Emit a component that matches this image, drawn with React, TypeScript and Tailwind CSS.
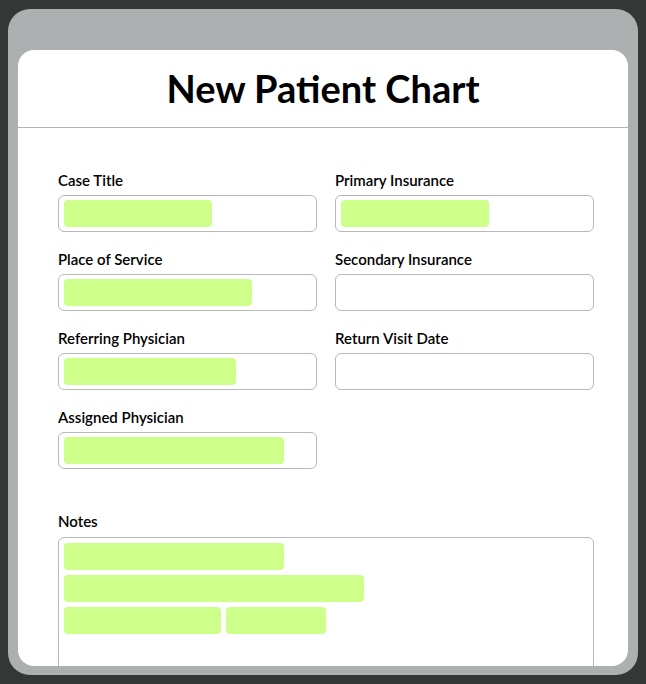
import React from 'react'

const fields = [
  { label: 'Case Title', fill: 148 },
  { label: 'Primary Insurance', fill: 148 },
  { label: 'Place of Service', fill: 188 },
  { label: 'Secondary Insurance', fill: 0 },
  { label: 'Referring Physician', fill: 172 },
  { label: 'Return Visit Date', fill: 0 },
  { label: 'Assigned Physician', fill: 220 },
]

function Field({ label, fill }: { label: string; fill: number }) {
  return (
    <div className="flex flex-col">
      <label className="h-[18px] mb-[6px] text-[15px] font-semibold leading-[18px] text-black">{label}</label>
      <div className="h-[37px] rounded-md border-[1.5px] border-[#b8b8b8] bg-white px-[5px] py-1">
        {fill > 0 && <div className="h-full rounded-[4px] bg-[#cdff8a]" style={{ width: fill }} />}
      </div>
    </div>
  )
}

export default function App() {
  return (
    <div
      className="w-[646px] h-[684px] overflow-hidden bg-[#353737] pl-2 pr-2 pt-[9px] pb-[9px]"
      style={{ fontFamily: 'Lato, "Noto Sans", sans-serif' }}>
      <div className="h-full rounded-[22px] bg-[#adb0b0] px-[10px] pt-[41px] pb-[9px]">
        <div className="h-full flex flex-col overflow-hidden rounded-2xl bg-white">
          {/* Header */}
          <div className="h-[78px] shrink-0 flex items-center justify-center border-b-[1.5px] border-[#b4b4b4]">
            <h1 className="text-[38px] font-bold text-black">New Patient Chart</h1>
          </div>

          {/* Form */}
          <div className="pl-10 pr-[34px] pt-[43px]">
            <div className="grid grid-cols-2 gap-x-[18px] gap-y-[18px]">
              {fields.map(f => <Field key={f.label} label={f.label} fill={f.fill} />)}
            </div>

            <div className="mt-[43px] flex flex-col">
              <label className="h-[18px] mb-[7px] text-[15px] font-semibold leading-[18px] text-black">Notes</label>
              <div className="h-[160px] rounded-md border-[1.5px] border-[#b8b8b8] px-[5px] pt-[5px] flex flex-col gap-[5px]">
                <div className="h-[27px] w-[220px] rounded-[4px] bg-[#cdff8a]" />
                <div className="h-[27px] w-[300px] rounded-[4px] bg-[#cdff8a]" />
                <div className="flex gap-[5px]">
                  <div className="h-[27px] w-[157px] rounded-[4px] bg-[#cdff8a]" />
                  <div className="h-[27px] w-[100px] rounded-[4px] bg-[#cdff8a]" />
                </div>
              </div>
            </div>
          </div>
        </div>
      </div>
    </div>
  )
}
